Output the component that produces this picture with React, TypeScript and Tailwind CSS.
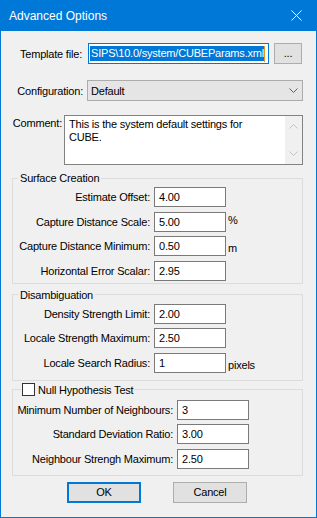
import React from 'react';

type RowProps = {
  label: string;
  value: string;
  unit?: string;
  unitPos?: 'top' | 'bottom';
  labelW: string;
};

const Row = ({ label, value, unit, unitPos, labelW }: RowProps) => (
  <div className="flex h-[20px] items-center">
    <div className={`${labelW} shrink-0 whitespace-nowrap text-right`}>{label}</div>
    <div className="ml-[4px] flex h-[20px] w-[72px] shrink-0 items-center border border-[#7a7a7a] bg-white pl-[4px]">
      {value}
    </div>
    {unit && (
      <span className={`ml-[2px] ${unitPos === 'top' ? 'self-start pt-[1px]' : 'self-end pb-[1px]'}`}>{unit}</span>
    )}
  </div>
);

const Chevron = ({ up, className }: { up?: boolean; className: string }) => (
  <svg className={className} width="9" height="5" viewBox="0 0 9 5" fill="none">
    <path d={up ? 'M0.5 4.5L4.5 0.5L8.5 4.5' : 'M0.5 0.5L4.5 4.5L8.5 0.5'} stroke="currentColor" strokeWidth="1" />
  </svg>
);

const App = () => {
  return (
    <div className="flex h-[518px] w-[317px] flex-col bg-[#0078d7] px-[1px] pb-[1px] font-['Segoe_UI','Liberation_Sans',Arial,sans-serif] text-[11px] leading-[14px] tracking-[-0.2px] text-black">
      {/* title bar */}
      <div className="flex h-[31px] shrink-0 items-center justify-between pl-[8px] pr-[14px] text-[12px] tracking-normal text-white">
        <span>Advanced Options</span>
        <svg width="11" height="11" viewBox="0 0 11 11">
          <path d="M0.5 0.5L10.5 10.5M10.5 0.5L0.5 10.5" stroke="white" strokeWidth="1" />
        </svg>
      </div>

      <div className="flex flex-1 flex-col bg-[#f0f0f0] pt-[12px]">
        {/* template file */}
        <div className="flex h-[21px] items-center">
          <div className="w-[87px] shrink-0 pr-[6px] text-right">Template file:</div>
          <div className="flex h-[21px] w-[181px] items-center justify-end overflow-hidden border border-[#0078d7] bg-white pl-[3px] pr-[3px]">
            <span className="whitespace-nowrap bg-[#0078d7] pl-[1px] leading-[15px] text-white">SIPS\10.0/system/CUBEParams.xml</span>
            <span className="h-[16px] w-[1px] shrink-0 bg-[#f0901e]" />
          </div>
          <div className="ml-[5px] flex h-[21px] w-[28px] items-center justify-center border border-[#adadad] bg-[#e1e1e1] pb-[2px]">
            ...
          </div>
        </div>

        {/* configuration */}
        <div className="mt-[16px] flex h-[21px] items-center">
          <div className="w-[86px] shrink-0 pr-[4px] text-right">Configuration:</div>
          <div className="flex h-[21px] w-[216px] items-center justify-between border border-[#acacac] bg-[#e5e5e5] pl-[3px] pr-[4px]">
            <span>Default</span>
            <Chevron className="text-[#606060]" />
          </div>
        </div>

        {/* comment */}
        <div className="mt-[14px] flex items-start">
          <div className="w-[63px] shrink-0 pr-[2px] pt-[1px] text-right">Comment:</div>
          <div className="flex h-[50px] w-[239px] border border-[#828282] bg-white">
            <div className="flex-1 pl-[4px] pt-[2px] leading-[13px]">
              This is the system default settings for
              <br />
              CUBE.
            </div>
            <div className="flex w-[17px] flex-col items-center justify-between bg-[#f0f0f0] py-[8px]">
              <Chevron up className="text-[#c2c2c2]" />
              <Chevron className="text-[#c2c2c2]" />
            </div>
          </div>
        </div>

        {/* surface creation */}
        <fieldset className="ml-[11px] mt-[6px] w-[291px] border border-[#dcdcdc] px-0 pb-[2px] pt-[2px]">
          <legend className="ml-[5px] px-[2px] leading-[14px]">Surface Creation</legend>
          <div className="flex flex-col gap-[4.5px]">
            <Row labelW="w-[137px]" label="Estimate Offset:" value="4.00" />
            <Row labelW="w-[137px]" label="Capture Distance Scale:" value="5.00" unit="%" unitPos="top" />
            <Row labelW="w-[137px]" label="Capture Distance Minimum:" value="0.50" unit="m" />
            <Row labelW="w-[137px]" label="Horizontal Error Scalar:" value="2.95" />
          </div>
        </fieldset>

        {/* disambiguation */}
        <fieldset className="ml-[11px] mt-[4px] w-[291px] border border-[#dcdcdc] px-0 pb-[7px] pt-[2px]">
          <legend className="ml-[5px] px-[2px] leading-[14px]">Disambiguation</legend>
          <div className="flex flex-col gap-[4.5px]">
            <Row labelW="w-[137px]" label="Density Strength Limit:" value="2.00" />
            <Row labelW="w-[137px]" label="Locale Strength Maximum:" value="2.50" />
            <Row labelW="w-[137px]" label="Locale Search Radius:" value="1" unit="pixels" />
          </div>
        </fieldset>

        {/* null hypothesis */}
        <fieldset className="ml-[11px] mt-[2px] w-[291px] border border-[#dcdcdc] px-0 pb-[6px] pt-[3px]">
          <legend className="ml-[8px] flex items-center px-[1px] leading-[14px]">
            <span className="h-[13px] w-[13px] border border-[#333333] bg-white" />
            <span className="ml-[3px]">Null Hypothesis Test</span>
          </legend>
          <div className="flex flex-col gap-[4.5px]">
            <Row labelW="w-[160px]" label="Minimum Number of Neighbours:" value="3" />
            <Row labelW="w-[160px]" label="Standard Deviation Ratio:" value="3.00" />
            <Row labelW="w-[160px]" label="Neighbour Strengh Maximum:" value="2.50" />
          </div>
        </fieldset>

        {/* buttons */}
        <div className="ml-[66px] mt-[6px] flex gap-[32px]">
          <button className="flex h-[21px] w-[74px] items-center justify-center border-2 border-[#0078d7] bg-[#e1e1e1]">
            OK
          </button>
          <button className="flex h-[21px] w-[74px] items-center justify-center border border-[#adadad] bg-[#e1e1e1]">
            Cancel
          </button>
        </div>
      </div>
    </div>
  );
};

export default App;
